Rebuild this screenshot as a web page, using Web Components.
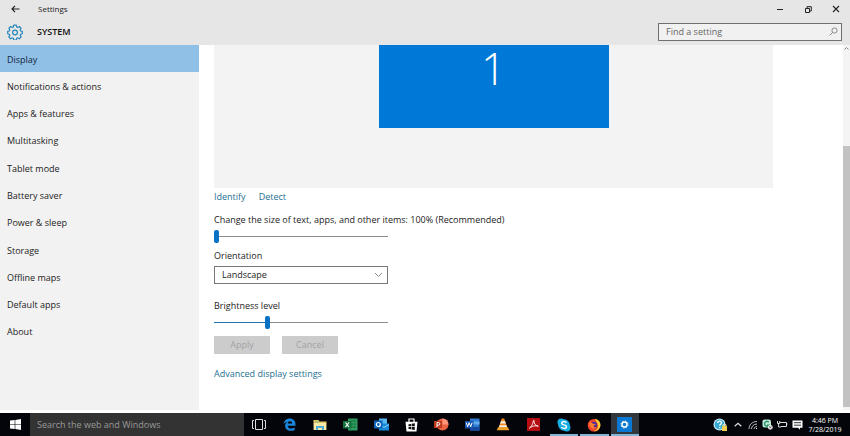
<!DOCTYPE html>
<html lang="en">
<head>
<meta charset="utf-8">
<title>Settings</title>
<style>
html, body { height: 100%; margin: 0; }
body { font: 9px/12px "Open Sans", "Noto Sans", sans-serif; color: #222; background: #fff; overflow: hidden; }
</style>
</head>
<body>
<desktop-screen>
  <settings-header slot="header"></settings-header>
  <settings-nav slot="nav"></settings-nav>
  <display-panel slot="main"></display-panel>
  <task-bar slot="taskbar"></task-bar>
</desktop-screen>
<script>
function define(name, markup, setup) {
  const template = document.createElement('template');
  template.innerHTML = '<style>*{box-sizing:border-box}button,input,select{font:inherit;color:inherit;margin:0}button{border:0;background:none;padding:0}svg{display:block}</style>' + markup;
  customElements.define(name, class extends HTMLElement {
    constructor() {
      super();
      this.attachShadow({ mode: 'open' }).append(template.content.cloneNode(true));
    }
    connectedCallback() { if (setup) setup(this, this.shadowRoot); }
  });
}

define('desktop-screen', `
<style>
:host { display: grid; height: 100vh; grid-template: auto minmax(0, 1fr) auto / 199px minmax(0, 1fr); }
.wide { grid-column: 1 / -1; }
.cell { display: grid; min-height: 0; padding-bottom: 3px; }
</style>
<div class="wide"><slot name="header"></slot></div>
<div class="cell"><slot name="nav"></slot></div>
<div class="cell"><slot name="main"></slot></div>
<div class="wide"><slot name="taskbar"></slot></div>`);

define('settings-header', `
<style>
:host { display: block; background: #e6e6e6; height: 45px; }
.title { display: flex; align-items: center; height: 18px; font-size: 8px; }
.back { width: 30px; display: grid; place-items: center; height: 18px; }
.name { margin-left: 8px; flex: 1; }
.win { width: 28px; height: 18px; display: grid; place-items: center; }
.bar { display: flex; align-items: center; height: 27px; padding: 0 8px 0 7px; }
h1 { font-size: 9px; line-height: 12px; font-weight: 600; margin: 0 0 0 14px; flex: 1; color: #111; }
.find { display: flex; align-items: center; width: 184px; height: 18px; border: 1px solid #707070; background: #f1f1f1; padding: 0 3px 0 7px; }
input { flex: 1; min-width: 0; border: 0; padding: 0; background: none; outline: 0; height: 14px; }
input::placeholder { color: #666; opacity: 1; }
</style>
<div class="title">
  <button class="back" aria-label="Back"><svg width="9" height="8" viewBox="0 0 9 8" fill="none" stroke="#222" stroke-width="1.2"><path d="M8.5 4H1M4 .8 1 4l3 3.2"/></svg></button>
  <span class="name">Settings</span>
  <button class="win" aria-label="Minimize"><svg width="6" height="6" viewBox="0 0 6 6"><path d="M0 3.5h6" stroke="#222"/></svg></button>
  <button class="win" aria-label="Restore"><svg width="7" height="7" viewBox="0 0 7 7" fill="none" stroke="#222"><path d="M.5 2.5h4v4h-4zM2 2V.7h4.3V5H5"/></svg></button>
  <button class="win" aria-label="Close"><svg width="8" height="8" viewBox="0 0 8 8"><path d="m1 1 6 6M7 1 1 7" stroke="#222" stroke-width="1.1"/></svg></button>
</div>
<div class="bar">
  <svg width="16" height="16" viewBox="0 0 16 16" fill="none" stroke="#2487bd" stroke-width="1.2" stroke-linejoin="round"><path d="M6.7 1.2h2.6l.4 1.8 1.1.5 1.6-1 1.8 1.8-1 1.6.5 1.1 1.6.4v2.4l-1.6.5-.5 1.1 1 1.5-1.8 1.9-1.6-1-1.1.4-.4 1.8H6.7l-.4-1.8-1.1-.4-1.6 1-1.8-1.9 1-1.5-.5-1.1-1.6-.5V7.400l1.6-.4.5-1.100-1-1.600 1.800-1.800 1.600 1 1.100-.500z"/><circle cx="8" cy="8.500" r="2.400"/></svg>
  <h1>SYSTEM</h1>
  <label class="find"><input type="text" placeholder="Find a setting" aria-label="Find a setting"><svg width="9" height="9" viewBox="0 0 9 9" fill="none" stroke="#888"><circle cx="5.500" cy="3.500" r="2.600"/><path d="M3.600 5.500.7 8.300"/></svg></label>
</div>`);

define('settings-nav', `
<style>
:host { display: block; background: #f2f2f2; }
nav { display: grid; grid-auto-rows: 1fr; height: 300px; }
a { display: flex; align-items: center; padding: 2px 0 0 7px; color: #222; text-decoration: none; }
a[aria-current] { background: #91c0e6; color: #102540; }
</style>
<nav aria-label="System"></nav>`, (host, root) => {
  const nav = root.querySelector('nav');
  nav.replaceChildren(...['Display', 'Notifications & actions', 'Apps & features', 'Multitasking', 'Tablet mode', 'Battery saver', 'Power & sleep', 'Storage', 'Offline maps', 'Default apps', 'About'].map((name, i) => {
    const a = document.createElement('a');
    a.href = '#';
    a.textContent = name;
    if (!i) a.setAttribute('aria-current', 'page');
    return a;
  }));
});

define('range-slider', `
<style>
:host { display: block; width: 174px; }
label { display: block; white-space: nowrap; }
input { appearance: none; display: block; width: 100%; height: 13px; margin-top: 4px; background: linear-gradient(90deg, #1b78ae var(--fill, 0%), #8c8c8c var(--fill, 0%)) center / 100% 1px no-repeat; outline: 0; }
input::-webkit-slider-thumb { appearance: none; width: 5px; height: 13px; border-radius: 2px; background: #0a72c4; }
</style>
<label for="range"><slot></slot></label>
<input id="range" type="range" min="0" max="100">`, (host, root) => {
  const input = root.querySelector('input');
  const paint = () => input.style.setProperty('--fill', input.value + '%');
  input.value = host.getAttribute('value');
  input.addEventListener('input', paint);
  paint();
});

define('display-panel', `
<style>
:host { display: grid; grid-template-columns: minmax(0, 1fr) 7px; background: #fff; }
.content { padding: 0 70px 0 15px; }
.preview { height: 143px; background: #f3f3f3; }
.monitor { width: 230px; height: 83px; margin: 0 auto; background: #0078d7; color: #fff; text-align: center; font: 300 44px/46px "Open Sans", "Noto Sans", sans-serif; }
a { color: #24708f; text-decoration: none; }
.links { display: flex; gap: 13px; margin: 3px 0 11px; }
.field { display: block; width: 174px; margin: 7px 0 16px; }
.pick { position: relative; display: block; margin-top: 4px; }
select { appearance: none; display: block; width: 100%; height: 18px; padding: 0 7px; border: 1px solid #777; border-radius: 0; background: #fff; }
.pick svg { position: absolute; right: 5px; top: 6px; pointer-events: none; }
.actions { display: flex; gap: 12px; margin: 7px 0 14px; }
.actions button { width: 56px; height: 18px; background: #ccc; color: #a2a2a2; }
.scroll { display: flex; flex-direction: column; background: #f4f4f4; padding-bottom: 3px; }
.scroll svg { margin: 2px auto 0; }
.thumb { margin-top: auto; height: 72%; background: #c2c2c2; }
</style>
<div class="content">
  <div class="preview"><div class="monitor">1</div></div>
  <div class="links"><a href="#">Identify</a><a href="#">Detect</a></div>
  <range-slider value="0">Change the size of text, apps, and other items: 100% (Recommended)</range-slider>
  <label class="field">Orientation
    <span class="pick"><select><option>Landscape</option><option>Portrait</option></select><svg width="9" height="6" viewBox="0 0 9 6" fill="none" stroke="#888"><path d="m1 1 3.500 3.500L8 1"/></svg></span>
  </label>
  <range-slider value="30">Brightness level</range-slider>
  <div class="actions"><button disabled>Apply</button><button disabled>Cancel</button></div>
  <a href="#">Advanced display settings</a>
</div>
<div class="scroll" aria-hidden="true"><svg width="5" height="3" viewBox="0 0 5 3"><path d="m.5 2.500 2-2 2 2" fill="none" stroke="#888"/></svg><div class="thumb"></div></div>`);

define('task-bar', `
<style>
:host { display: flex; align-items: stretch; height: 23px; background: #04050a; color: #fff; }
button { display: grid; place-items: center; }
.start { width: 30px; }
.search { width: 214px; background: #333; border: 0; border-radius: 0; padding: 0 7px; outline: 0; }
.search::placeholder { color: #999; opacity: 1; }
.apps { display: grid; grid-template-columns: repeat(13, 1fr); width: 396px; }
.apps button { border-bottom: 2px solid transparent; border-top: 2px solid transparent; margin: 0 1px; }
.apps .open { border-bottom-color: #83b4d4; }
.apps .active { background: #32373d; border-bottom-color: #83b4d4; }
.tray { margin-left: auto; display: flex; align-items: center; padding-right: 7px; }
.tray button { width: 15px; height: 23px; }
.tray .help { width: 19px; }
.clock { width: 36px; margin-left: 2px; text-align: center; font-size: 7px; line-height: 9px; white-space: nowrap; }
</style>
<button class="start" aria-label="Start"><svg width="11" height="11" viewBox="0 0 11 11" fill="#fff"><path d="M0 1.600 4.700 1v4.200H0zM5.300.9 11 0v5.200H5.300zM0 5.800h4.700V10L0 9.400zM5.300 5.800H11V11l-5.700-.9z"/></svg></button>
<input class="search" type="text" placeholder="Search the web and Windows" aria-label="Search the web and Windows">
<div class="apps">
  <button aria-label="Task view"><svg width="14" height="11" viewBox="0 0 14 11" fill="none" stroke="#ddd"><path d="M3.500.500h7v10h-7zM2 1.500H.500v8H2M12 1.500h1.500v8H12"/></svg></button>
  <button aria-label="Edge"><svg width="13" height="13" viewBox="0 0 13 13"><path d="M.6 6C1 2.500 3.500.400 6.700.400c3.600 0 5.800 2.500 5.800 6v1.300H4.600c.1 2 1.800 2.800 3.700 2.800 1.300 0 2.400-.3 3.400-.9v2.300c-1.100.6-2.500.9-4 .9-3.300 0-5.600-2-5.600-5 0-2 1-3.500 2.700-4.400C2.900 3.800 1.500 4.600.6 6zm4.100-.5h4.500c0-1.500-.8-2.300-2.200-2.300S4.900 4.100 4.700 5.500z" fill="#1b86dc"/></svg></button>
  <button aria-label="File Explorer"><svg width="14" height="12" viewBox="0 0 14 12"><path d="M.500 1h5l1 1.500h7V11H.500z" fill="#e8c565"/><path d="M1 4h12v7H1z" fill="#fbeaa5"/><path d="M3 7h8v4H9V9H5v2H3z" fill="#55acd8"/><path d="M2 2.500h4v1H2z" fill="#74b87d"/></svg></button>
  <button aria-label="Excel"><svg width="15" height="13" viewBox="0 0 15 13"><path d="M5 .500h9.500v12H5z" fill="#2f9d61"/><path d="M8 3h5M8 6h5M8 9h5" stroke="#126b3a"/><path d="M0 3h8.500v7.500H0z" fill="#13713d"/><path d="m2.500 4.500 3.500 4.500M6 4.500 2.500 9" stroke="#fff" stroke-width="1.200"/></svg></button>
  <button aria-label="Outlook"><svg width="15" height="13" viewBox="0 0 15 13"><path d="M5 .500h8v7H5z" fill="#59b7ee"/><path d="M5 5.500h10v7H5z" fill="#1789d6"/><path d="m6 6.500 4 3 5-3" fill="none" stroke="#8dd0fa"/><path d="M0 2.500h8.500v8H0z" fill="#0865ba"/><circle cx="4.300" cy="6.500" r="2" fill="none" stroke="#fff" stroke-width="1.200"/></svg></button>
  <button aria-label="Store"><svg width="13" height="14" viewBox="0 0 13 14"><path d="M4 4V1h5v3" fill="none" stroke="#fff" stroke-width="1.200"/><path d="M.500 3.800h12l-1 9.700h-10z" fill="#fff"/><path d="m3.500 6.300 2.500-.4v2.400H3.500zm3.100-.5 3.200-.5v3H6.600zM3.500 9H6v2.300l-2.500-.4zm3.100 0h3.200v3l-3.200-.6z" fill="#111"/></svg></button>
  <button aria-label="PowerPoint"><svg width="15" height="13" viewBox="0 0 15 13"><circle cx="8.500" cy="6.500" r="6" fill="#e76343"/><path d="M8.500.500a6 6 0 0 1 6 6h-6z" fill="#ff967a"/><path d="M0 3h8v7H0z" fill="#be3a1d"/><path d="M3 9V4.500h1.500a1.300 1.300 0 0 1 0 2.700H3" fill="none" stroke="#fff"/></svg></button>
  <button aria-label="Word"><svg width="15" height="13" viewBox="0 0 15 13"><path d="M5 .500h9.500v12H5z" fill="#2f7bd2"/><path d="M5 3.500h9.500v3H5z" fill="#62aef1"/><path d="M5 9h9.500v3.500H5z" fill="#1748a0"/><path d="M0 3h8.500v7.500H0z" fill="#1955af"/><path d="m1.300 4.700 1.300 4 1.500-4 1.600 4 1.400-4" fill="none" stroke="#fff"/></svg></button>
  <button aria-label="VLC"><svg width="14" height="13" viewBox="0 0 14 13"><path d="M5.800.500h2.400l3.300 9.500h-9z" fill="#f58a1b"/><path d="M4.900 3.200h4.200l.8 2.300H4.100zM3.500 7.300h7l.6 1.700H2.900z" fill="#eee"/><path d="M2 9.300h10l1.300 3H.7z" fill="#e9a12c"/></svg></button>
  <button aria-label="Acrobat"><svg width="13" height="13" viewBox="0 0 13 13"><path d="M0 0h13v13H0z" fill="#b60d12"/><path d="M2 10.500c2-1.200 4-4.500 4.300-7.500.1-1 .9-.9.800 0-.4 2.500 1.200 4.600 4.200 5.200-2-.8-5.300-.5-8 1.300" fill="none" stroke="#fff" stroke-width=".9"/></svg></button>
  <button class="open" aria-label="Skype"><svg width="14" height="14" viewBox="0 0 14 14"><circle cx="7" cy="7" r="5.800" fill="#17aee4"/><circle cx="4.200" cy="4.200" r="3.700" fill="#17aee4"/><circle cx="9.800" cy="9.800" r="3.700" fill="#17aee4"/><path d="M9.400 4.700C8.500 3 4.700 3.100 4.700 5.200c0 2.300 4.800 1 4.800 3.500 0 2.200-4.200 2.200-5.100.3" fill="none" stroke="#fff" stroke-width="1.500"/></svg></button>
  <button class="open" aria-label="Firefox"><svg width="14" height="14" viewBox="0 0 14 14"><circle cx="7" cy="7.200" r="6.300" fill="#f0472c"/><path d="M8 .700c4 1 6 4 5.300 7.500-.7 3.300-4 5.300-7 5 3-.8 5-3 4.700-5.500C10.800 5 9.600 4.500 8 .700z" fill="#ffc934"/><circle cx="6.700" cy="7" r="3.300" fill="#4a2d94"/><path d="M2 5c2-1 3-.3 4 .7L9 6 7 7.500c-1 .6 0 2 1.800 1.500C7 12 2.500 10.500 2 5z" fill="#ff7b2d"/></svg></button>
  <button class="active" aria-label="Settings"><svg width="15" height="15" viewBox="0 0 15 15"><path d="M0 0h15v15H0z" fill="#0978d3"/><circle cx="7.500" cy="7.500" r="2.500" fill="none" stroke="#fff" stroke-width="1.400"/><circle cx="7.500" cy="7.500" r="3.600" fill="none" stroke="#fff" stroke-width=".8" stroke-dasharray="1.400 1.430"/></svg></button>
</div>
<div class="tray">
  <button class="help" aria-label="Help"><svg width="15" height="14" viewBox="0 0 15 14"><circle cx="6.500" cy="6.500" r="6" fill="#d6f2fb"/><circle cx="6.500" cy="6.500" r="4.900" fill="#35a9d5"/><path d="M4.600 5c.1-2.600 4.100-2.300 3.900 0-.1 1.300-1.800 1.400-1.800 2.800M6.700 9v1.300" fill="none" stroke="#fff" stroke-width="1.400"/><path d="M9 8h5v5H9z" fill="#f1cd55"/><path d="M10 8V6.700h3V8" fill="none" stroke="#f1e0a0"/></svg></button>
  <button aria-label="Show hidden icons"><svg width="8" height="5" viewBox="0 0 8 5"><path d="m.7 4.300 3.300-3 3.300 3" fill="none" stroke="#ddd" stroke-width="1.200"/></svg></button>
  <button aria-label="Network"><svg width="10" height="10" viewBox="0 0 10 10" fill="none" stroke="#bbb"><path d="M1 9C1 5 4 1.500 9 1.500M3.500 9C3.500 6.500 5.500 4 9 4M6 9c0-1.200 1-2.400 3-2.400"/><path d="M8 8.500h1" stroke="#fff"/></svg></button>
  <button aria-label="Security"><svg width="11" height="11" viewBox="0 0 11 11"><rect x=".500" y=".500" width="8.500" height="8" rx="2" fill="#bfe5d3"/><path d="M6.800 3.200a2.400 2.400 0 1 0 .3 2.800H5" fill="none" stroke="#198e62" stroke-width="1.200"/><circle cx="8.300" cy="8.300" r="2.400" fill="#eee"/><path d="m7.300 7.300 2 2m0-2-2 2" stroke="#333" stroke-width=".7"/></svg></button>
  <button aria-label="Battery"><svg width="11" height="9" viewBox="0 0 11 9" fill="none" stroke="#ddd"><path d="M3 2.500h6.500v4H4M9.500 4h1M.500 1v2.500h2.200V1M1.600 3.500V7H4"/></svg></button>
  <button aria-label="Notifications"><svg width="11" height="10" viewBox="0 0 11 10"><path d="M.500.500h10v7.300H8v2L6 7.800H.500z" fill="#fff"/><path d="M2 2.700h7M2 5.200h7" stroke="#333"/></svg></button>
  <div class="clock">4:46 PM<br>7/28/2019</div>
</div>`);
</script>
</body>
</html>
